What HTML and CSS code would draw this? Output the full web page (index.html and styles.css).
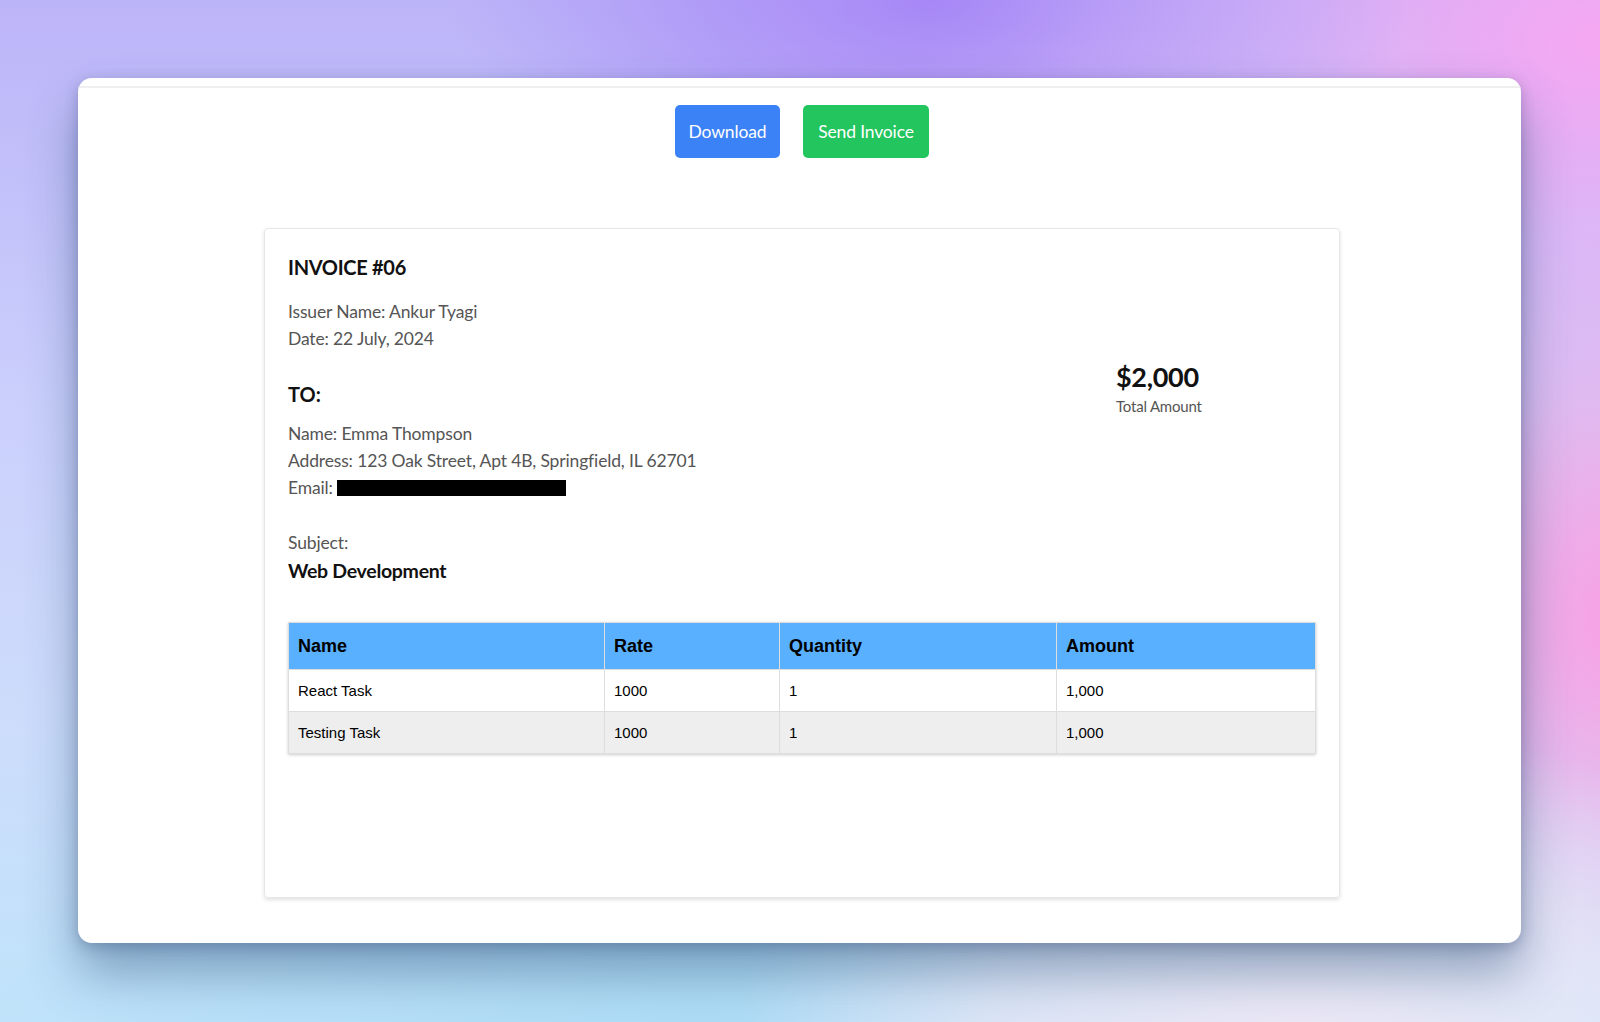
FILE: index.html
```html
<!DOCTYPE html>
<html lang="en">
<head>
<meta charset="utf-8">
<title>Invoice</title>
<link rel="stylesheet" href="styles.css">
</head>
<body>
<div class="stage">
  <div class="window">
    <div class="window-rule"></div>
    <div class="window-body">
      <div class="toolbar">
        <button class="btn btn-blue" type="button">Download</button>
        <button class="btn btn-green" type="button">Send Invoice</button>
      </div>
      <div class="card">
        <div class="invoice-head">
          <div class="head-left">
            <h1 class="title">INVOICE #06</h1>
            <div class="meta">
              <div>Issuer Name: Ankur Tyagi</div>
              <div>Date: 22 July, 2024</div>
            </div>
            <h2 class="to">TO:</h2>
            <div class="meta">
              <div>Name: Emma Thompson</div>
              <div>Address: 123 Oak Street, Apt 4B, Springfield, IL 62701</div>
              <div>Email: <span class="redact"></span></div>
            </div>
          </div>
          <div class="total">
            <div class="total-value">$2,000</div>
            <div class="total-label">Total Amount</div>
          </div>
        </div>
        <div class="subject-label">Subject:</div>
        <div class="subject">Web Development</div>
        <table class="items">
          <colgroup>
            <col class="c-name"><col class="c-rate"><col class="c-qty"><col class="c-amt">
          </colgroup>
          <thead>
            <tr><th>Name</th><th>Rate</th><th>Quantity</th><th>Amount</th></tr>
          </thead>
          <tbody>
            <tr><td>React Task</td><td>1000</td><td>1</td><td>1,000</td></tr>
            <tr class="alt"><td>Testing Task</td><td>1000</td><td>1</td><td>1,000</td></tr>
          </tbody>
        </table>
      </div>
    </div>
  </div>
</div>
</body>
</html>
```
FILE: styles.css
```css
* { box-sizing: border-box; }

html, body {
  margin: 0;
  height: 1022px;
  overflow: hidden;
}

body {
  font-family: Lato, "Noto Sans", sans-serif;
  background:
    radial-gradient(ellipse 480px 240px at 930px 0px, rgba(164,132,246,0.95), rgba(164,132,246,0) 100%),
    radial-gradient(ellipse 360px 300px at 1080px 60px, rgba(226,200,248,0.8), rgba(226,200,248,0) 100%),
    radial-gradient(ellipse 560px 300px at 1300px 1022px, rgba(236,232,246,1), rgba(236,232,246,0.7) 55%, rgba(236,232,246,0) 100%),
    radial-gradient(ellipse 420px 400px at 1640px 620px, rgba(250,158,226,1), rgba(250,158,226,0) 100%),
    radial-gradient(ellipse 520px 360px at 1600px 40px, rgba(246,168,242,1), rgba(246,168,242,0) 100%),
    radial-gradient(ellipse 700px 300px at 700px 1022px, rgba(174,220,246,1), rgba(174,220,246,0) 100%),
    linear-gradient(180deg, #bcb4f8 0%, #cbd0fc 40%, #cddcfb 70%, #bfe3fa 100%);
}

.stage {
  padding: 78px 79px 0 78px;
}

.window {
  height: 865px;
  background: #fff;
  border-radius: 14px;
  padding-top: 8px;
  box-shadow: 0 30px 50px rgba(40, 80, 120, 0.45), 0 4px 14px rgba(60, 60, 110, 0.3);
  overflow: hidden;
}

.window-rule {
  height: 2px;
  background: #efefef;
}

.window-body {
  padding-left: 5px;
}

.toolbar {
  display: flex;
  justify-content: center;
  gap: 23px;
  padding-top: 17px;
}

.btn {
  font-family: Lato, "Noto Sans", sans-serif;
  font-size: 17.5px;
  letter-spacing: -0.15px;
  line-height: 27px;
  color: #fff;
  border: 0;
  border-radius: 5px;
  height: 53px;
  padding: 0;
  white-space: nowrap;
  cursor: pointer;
}

.btn-blue { background: #3b82f6; width: 105px; }
.btn-green { background: #22c55e; width: 126px; }

.card {
  width: 1076px;
  height: 670px;
  margin: 70px auto 0;
  border: 1px solid #e6e6e6;
  border-radius: 4px;
  box-shadow: 0 2px 4px rgba(0, 0, 0, 0.12);
  padding: 24px 23px;
}

.invoice-head {
  display: flex;
  justify-content: space-between;
}

.title {
  margin: 0;
  font-size: 20px;
  letter-spacing: -0.3px;
  line-height: 28px;
  font-weight: 700;
  color: #111;
}

.meta {
  font-size: 17.5px;
  letter-spacing: -0.15px;
  line-height: 27px;
  color: #555;
}

.title + .meta { margin-top: 17px; }

.to {
  margin: 28px 0 0;
  font-size: 20px;
  line-height: 28px;
  font-weight: 700;
  color: #111;
}

.to + .meta { margin-top: 12px; }

.redact {
  display: inline-block;
  width: 229px;
  height: 16px;
  background: #000;
  vertical-align: -2px;
}

.total {
  margin-top: 107px;
  margin-right: 110px;
  width: 90px;
}

.total-value {
  font-size: 27px;
  letter-spacing: -0.3px;
  line-height: 34px;
  font-weight: 700;
  color: #111;
}

.total-label {
  font-size: 15px;
  letter-spacing: -0.2px;
  line-height: 20px;
  color: #555;
  margin-top: 2px;
}

.subject-label {
  margin-top: 28px;
  font-size: 17.5px;
  letter-spacing: -0.15px;
  line-height: 27px;
  color: #555;
}

.subject {
  margin-top: 1px;
  font-size: 19.5px;
  letter-spacing: -0.3px;
  line-height: 28px;
  font-weight: 700;
  color: #111;
}

.items {
  margin-top: 37px;
  width: 100%;
  border-collapse: collapse;
  table-layout: fixed;
  font-family: "Liberation Sans", Arial, sans-serif;
  box-shadow: 0 1px 3px rgba(0, 0, 0, 0.2);
}

.c-name { width: 316px; }
.c-rate { width: 175px; }
.c-qty { width: 277px; }

.items th, .items td {
  border: 1px solid #dddddd;
  text-align: left;
  padding: 0 9px;
  color: #000;
}

.items th {
  background: #58b0ff;
  font-size: 18px;
  font-weight: 700;
  height: 47px;
}

.items td {
  font-size: 15px;
  height: 42px;
}

.items tr.alt td { background: #eeeeee; }
```
